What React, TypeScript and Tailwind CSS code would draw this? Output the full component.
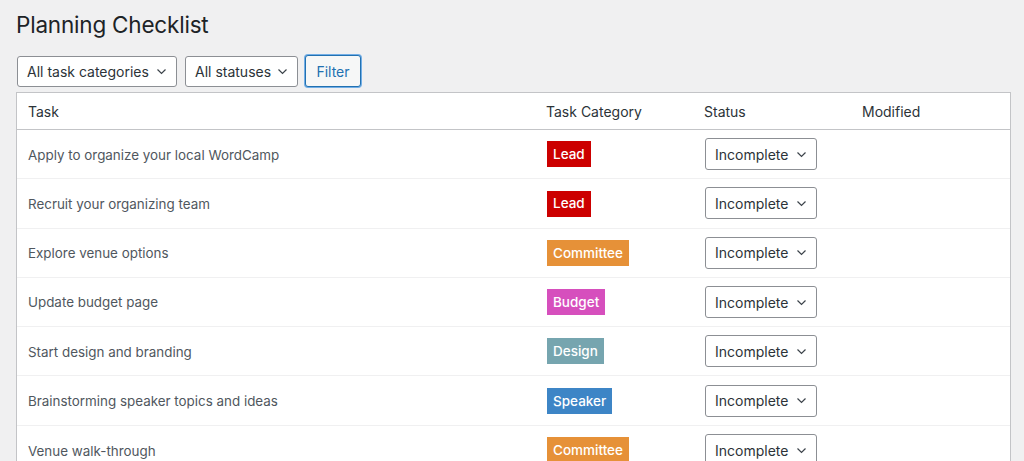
import { useState } from 'react';

const categoryStyles: Record<string, string> = {
  Lead: 'bg-[#cc0000]',
  Committee: 'bg-[#e69138]',
  Budget: 'bg-[#d64fbd]',
  Design: 'bg-[#76a5af]',
  Speaker: 'bg-[#3d85c6]',
};

const tasks = [
  { title: 'Apply to organize your local WordCamp', category: 'Lead' },
  { title: 'Recruit your organizing team', category: 'Lead' },
  { title: 'Explore venue options', category: 'Committee' },
  { title: 'Update budget page', category: 'Budget' },
  { title: 'Start design and branding', category: 'Design' },
  { title: 'Brainstorming speaker topics and ideas', category: 'Speaker' },
  { title: 'Venue walk-through', category: 'Committee' },
];

function Chevron() {
  return (
    <svg width="11" height="7" viewBox="0 0 11 7" fill="none" className="shrink-0">
      <path d="M1.5 1.5l4 4 4-4" stroke="#3c434a" strokeWidth="1.2" />
    </svg>
  );
}

function SelectBox({ label, className }: { label: string; className: string }) {
  return (
    <div
      className={`flex items-center justify-between h-[31px] pl-[9px] pr-[9px] bg-white border border-[#8c8f94] rounded-[3px] text-[14px] text-[#2c3338] ${className}`}
    >
      <span>{label}</span>
      <Chevron />
    </div>
  );
}

export default function App() {
  const [rows] = useState(tasks);

  return (
    <div className="min-h-screen bg-[#f0f0f1] font-['Inter','Noto_Sans',sans-serif] text-[#1d2327]">
      <div className="pl-4 pt-[10px]">
        {/* Page title */}
        <h1 className="text-[22.5px] leading-[29px] font-normal text-[#1d2327] tracking-[-0.2px]">
          Planning Checklist
        </h1>

        {/* Filters */}
        <div className="flex items-center gap-2 mt-[16px] pl-px">
          <SelectBox label="All task categories" className="w-[160px]" />
          <SelectBox label="All statuses" className="w-[113px]" />
          <button className="h-[32px] w-[56px] ml-[-1px] bg-[#f6f7f7] border border-[#2271b1] rounded-[3px] text-[14px] text-[#2271b1] shadow-[0_0_0_1px_#72aee6]">
            Filter
          </button>
        </div>

        {/* Table */}
        <div className="mt-[5px] w-[995px] bg-white border border-[#c3c4c7]">
          <div className="grid grid-cols-[520px_158px_158px_1fr] h-[37px] items-center border-b border-[#c3c4c7] text-[14px] text-[#2c3338]">
            <div className="pl-[11px]">Task</div>
            <div className="pl-[9px]">Task Category</div>
            <div className="pl-[9px]">Status</div>
            <div className="pl-[9px]">Modified</div>
          </div>
          {rows.map((task, index) => (
            <div
              key={index}
              className="grid grid-cols-[520px_158px_158px_1fr] h-[49.3px] items-center border-b border-[#f0f0f1] last:border-b-0"
            >
              <div className="pl-[11px] pt-[1px] text-[13.4px] text-[#50575e]">{task.title}</div>
              <div className="pl-[10px]">
                <span
                  className={`inline-flex items-center h-[26px] px-[6px] text-[13.5px] font-medium text-white ${categoryStyles[task.category]}`}
                >
                  {task.category}
                </span>
              </div>
              <div className="pl-[10px]">
                <SelectBox label="Incomplete" className="w-[112px] h-[32px]" />
              </div>
              <div />
            </div>
          ))}
        </div>
      </div>
    </div>
  );
}
